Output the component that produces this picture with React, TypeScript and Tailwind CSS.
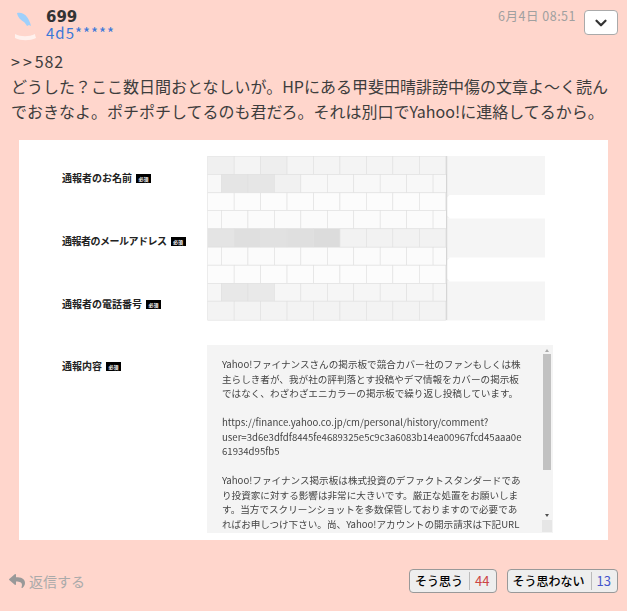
import { ChevronDown } from "lucide-react";
import { FaReply } from "react-icons/fa";

const JP = "font-['Noto_Sans_CJK_JP','Noto_Sans',sans-serif]";

const ROW_Y = [156.7, 175, 193.3, 211, 229.3, 247.7, 265.7, 284, 301.7, 320.7];

// base tile colour per row, then the darker tiles by index
const ROWS: { fill: string; offset: boolean; dark?: Record<number, string> }[] = [
  { fill: "#f4f4f4", offset: false, dark: { 0: "#f0f0f0", 2: "#eeeeee" } },
  { fill: "#f8f8f8", offset: true, dark: { 0: "#e5e5e5", 1: "#e6e6e6", 2: "#f1f1f1" } },
  { fill: "#fcfcfc", offset: false },
  { fill: "#fbfbfb", offset: true },
  { fill: "#f2f2f2", offset: false, dark: { 0: "#e4e4e4", 1: "#dfdfdf", 2: "#e1e1e1", 3: "#dfdfdf", 4: "#dcdcdc" } },
  { fill: "#fbfbfb", offset: true },
  { fill: "#fcfcfc", offset: false },
  { fill: "#f6f6f6", offset: true, dark: { 0: "#e8e8e8", 1: "#e9e9e9" } },
  { fill: "#f3f3f3", offset: false },
];

function Mosaic() {
  return (
    <svg width="338" height="165" viewBox="207 156.5 338 165" className="block">
      <rect x="447" y="156.5" width="98" height="39" fill="#f5f5f5" />
      <rect x="447" y="219" width="98" height="39" fill="#f5f5f5" />
      <rect x="447" y="282" width="98" height="39" fill="#f5f5f5" />
      <path d="M447 195h3l-3 3zM447 219h3l-3-3zM447 258h3l-3 3zM447 282h3l-3-3z" fill="#f3f3f3" />
      {ROWS.map((row, r) => {
        const y = ROW_Y[r];
        const h = ROW_Y[r + 1] - y;
        const start = row.offset ? 221.5 : 207.7;
        const tiles = [];
        if (row.offset) {
          tiles.push(<rect key="lead" x="207.7" y={y} width="13.8" height={h} fill={row.fill} stroke="#e2e2e2" strokeWidth="0.6" />);
        }
        for (let i = 0; i < 9; i++) {
          const x = start + i * 26.45;
          if (x >= 446.7) break;
          const w = Math.min(26.45, 446.7 - x);
          tiles.push(
            <rect key={i} x={x} y={y} width={w} height={h} fill={row.dark?.[i] ?? row.fill} stroke="#e0e0e0" strokeWidth="0.6" />
          );
        }
        return <g key={r}>{tiles}</g>;
      })}
      <line x1="446.7" y1="156.5" x2="446.7" y2="320.7" stroke="#d0d0d0" />
    </svg>
  );
}

function FormLabel({ text, className, textClass = "" }: { text: string; className: string; textClass?: string }) {
  return (
    <div className={`flex items-center gap-[4px] h-[12px] ${className}`}>
      <span className={`text-[10px] leading-[12px] font-bold text-[#222222] whitespace-nowrap ${textClass}`}>{text}</span>
      <span className="w-[15px] h-[9px] bg-black text-white text-[5px] leading-[9px] text-center font-bold">必須</span>
    </div>
  );
}

const BODY_LINES = [
  "Yahoo!ファイナンスさんの掲示板で競合カバー社のファンもしくは株",
  "主らしき者が、我が社の評判落とす投稿やデマ情報をカバーの掲示板",
  "ではなく、わざわざエニカラーの掲示板で繰り返し投稿しています。",
  "",
  "https://finance.yahoo.co.jp/cm/personal/history/comment?",
  "user=3d6e3dfdf8445fe4689325e5c9c3a6083b14ea00967fcd45aaa0e",
  "61934d95fb5",
  "",
  "Yahoo!ファイナンス掲示板は株式投資のデファクトスタンダードであ",
  "り投資家に対する影響は非常に大きいです。厳正な処置をお願いしま",
  "す。当方でスクリーンショットを多数保管しておりますので必要であ",
  "ればお申しつけ下さい。尚、Yahoo!アカウントの開示請求は下記URL",
];

function VoteButton({ label, count, countClass }: { label: string; count: number; countClass: string }) {
  return (
    <button className="flex items-center h-[24px] pl-[5px] pr-[6px] bg-[#eeeeee] border border-[#999999] rounded-[4px]">
      <span className="text-[12px] font-medium text-black pr-[6px] border-r border-[#bbbbbb] leading-[18px]">{label}</span>
      <span className={`text-[13px] pl-[5px] leading-[18px] ${countClass}`}>{count}</span>
    </button>
  );
}

export default function App() {
  return (
    <div className={`w-[627px] h-[611px] overflow-hidden bg-[#ffd6cc] ${JP}`}>
      <div className="flex h-[49px] pt-[10px] pl-[13px] pr-[9px]">
        <svg width="28" height="32" viewBox="0 0 28 32" className="shrink-0">
          <path d="M4 3c4-1 8 1 10 4 2 3 3 5 4 9l-2-1-2 1c-1-2-2-3-3-4-3-2-6-4-7-9z" fill="#9fd0fb" />
          <path d="M2 24c6 3 14 3 20 0 0 2 1 3 1 4-6 3-15 3-21 0z" fill="#ffffff" opacity="0.65" />
        </svg>
        <div className="ml-[5px]">
          <div className="font-['DejaVu_Sans',sans-serif] text-[15px] leading-[15px] font-bold text-[#333333]">699</div>
          <div className="text-[15px] leading-[16px] text-[#3b78d8] tracking-[1px]">4d5*****</div>
        </div>
        <div className="ml-auto text-[12.5px] leading-[12px] text-[#a0a0a0] tracking-[0.5px]">6月4日 08:51</div>
        <button className="ml-[8px] w-[34px] h-[25px] flex items-center justify-center bg-white border border-[#aaaaaa] rounded-[4px]">
          <ChevronDown size={18} strokeWidth={3} className="text-[#333333]" />
        </button>
      </div>

      <div className="px-[11px] text-[16px] leading-[25px] text-[#3d3d3d] h-[91px]">
        <div><span className="tracking-[3px]">{">>"}</span><span className="tracking-[0.8px]">582</span></div>
        <div className="whitespace-nowrap">どうした？ここ数日間おとなしいが。HPにある甲斐田晴誹謗中傷の文章よ～く読ん</div>
        <div className="whitespace-nowrap">でおきなよ。ポチポチしてるのも君だろ。それは別口でYahoo!に連絡してるから。</div>
      </div>

      <div className="ml-[19px] w-[589px] h-[400px] bg-white flex pt-[16px]">
        <div className="w-[188px] pl-[43px] shrink-0 flex flex-col">
          <FormLabel text="通報者のお名前" className="mt-[16px]" />
          <FormLabel text="通報者のメールアドレス" className="mt-[51px]" textClass="tracking-[-0.5px]" />
          <FormLabel text="通報者の電話番号" className="mt-[51px]" />
          <FormLabel text="通報内容" className="mt-[50px]" />
        </div>
        <div className="flex flex-col">
          <Mosaic />
          <div className="mt-[24px] w-[346px] h-[188px] bg-[#f4f4f4] flex overflow-hidden">
            <div className="flex-1 pl-[15px] pt-[12px] text-[9.6px] leading-[14.55px] text-[#444444] blur-[0.25px] overflow-hidden">
              {BODY_LINES.map((line, i) => (
                <div key={i} className="h-[14.55px] whitespace-nowrap">{line}</div>
              ))}
            </div>
            <div className="w-[10px] mr-[1px] flex flex-col items-center shrink-0">
              <div className="mt-[4px] w-0 h-0 border-x-[2px] border-x-transparent border-b-[3px] border-b-[#aaaaaa]" />
              <div className="mt-[2px] w-[8px] h-[116px] bg-[#c1c1c1]" />
              <div className="mt-[44px] w-0 h-0 border-x-[2px] border-x-transparent border-t-[3px] border-t-[#505050]" />
              <div className="mt-[3px] w-[10px] h-[12px] bg-[#e6e6e6]" />
            </div>
          </div>
        </div>
      </div>

      <div className="flex items-center pl-[9px] pr-[9px] pt-[29px]">
        <FaReply size={16} className="text-[#999999]" />
        <span className="ml-[4px] text-[14px] leading-[18px] -mt-[1px] text-[#aaaaaa]">返信する</span>
        <div className="ml-auto flex gap-[10px]">
          <VoteButton label="そう思う" count={44} countClass="text-[#cc4444]" />
          <VoteButton label="そう思わない" count={13} countClass="text-[#4455cc]" />
        </div>
      </div>
    </div>
  );
}
